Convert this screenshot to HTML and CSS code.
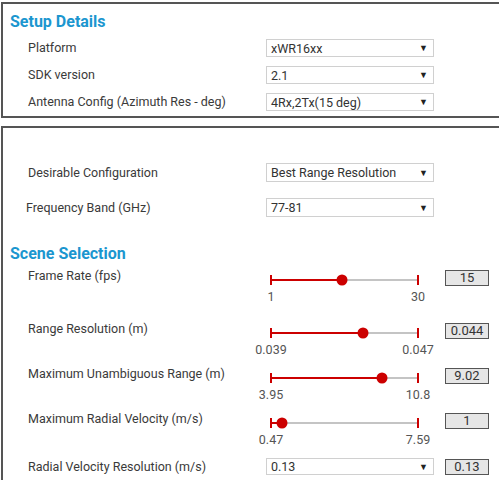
FILE: index.html
```html
<!DOCTYPE html>
<html lang="en">
<head>
    <meta charset="UTF-8">
    <meta name="viewport" content="width=device-width, initial-scale=1.0">
    <title>Setup Details</title>
    <link rel="stylesheet" href="styles.css">
</head>
<body>
    <section class="panel setup">
        <h2 class="heading">Setup Details</h2>
        <div class="row">
            <span class="label">Platform</span>
            <div class="select"><span>xWR16xx</span><i>&#9660;</i></div>
        </div>
        <div class="row">
            <span class="label">SDK version</span>
            <div class="select"><span>2.1</span><i>&#9660;</i></div>
        </div>
        <div class="row">
            <span class="label">Antenna Config (Azimuth Res - deg)</span>
            <div class="select"><span>4Rx,2Tx(15 deg)</span><i>&#9660;</i></div>
        </div>
    </section>

    <section class="panel scene">
        <div class="row tall">
            <span class="label">Desirable Configuration</span>
            <div class="select"><span>Best Range Resolution</span><i>&#9660;</i></div>
        </div>
        <div class="row tall freq">
            <span class="label">Frequency Band (GHz)</span>
            <div class="select"><span>77-81</span><i>&#9660;</i></div>
        </div>

        <h2 class="heading">Scene Selection</h2>

        <div class="slider-row first">
            <span class="label">Frame Rate (fps)</span>
            <div class="slider">
                <div class="track"><div class="fill" style="width:48.3%"></div><span class="knob" style="left:48.3%"></span></div>
                <div class="ticks"><span>1</span><span>30</span></div>
            </div>
            <div class="value">15</div>
        </div>
        <div class="slider-row">
            <span class="label">Range Resolution (m)</span>
            <div class="slider">
                <div class="track"><div class="fill" style="width:62.5%"></div><span class="knob" style="left:62.5%"></span></div>
                <div class="ticks"><span>0.039</span><span>0.047</span></div>
            </div>
            <div class="value">0.044</div>
        </div>
        <div class="slider-row">
            <span class="label">Maximum Unambiguous Range (m)</span>
            <div class="slider">
                <div class="track"><div class="fill" style="width:75.5%"></div><span class="knob" style="left:75.5%"></span></div>
                <div class="ticks"><span>3.95</span><span>10.8</span></div>
            </div>
            <div class="value">9.02</div>
        </div>
        <div class="slider-row">
            <span class="label">Maximum Radial Velocity (m/s)</span>
            <div class="slider">
                <div class="track"><div class="fill" style="width:7.4%"></div><span class="knob" style="left:7.4%"></span></div>
                <div class="ticks"><span>0.47</span><span>7.59</span></div>
            </div>
            <div class="value">1</div>
        </div>
        <div class="row last">
            <span class="label">Radial Velocity Resolution (m/s)</span>
            <div class="select"><span>0.13</span><i>&#9660;</i></div>
            <div class="value">0.13</div>
        </div>
    </section>
</body>
</html>
```

FILE: styles.css
```css
body {
    margin: 0;
    padding: 2px 0 0 1px;
    font-family: Roboto, "Liberation Sans", sans-serif;
    color: #333;
    background-color: #fff;
    overflow: hidden;
}
.panel {
    border: 2px solid #555;
    margin-right: -6px;
    box-sizing: border-box;
}
.setup {
    height: 116px;
    padding-bottom: 5px;
}
.scene {
    margin-top: 8px;
    padding-top: 35px;
    height: 354px;
    border-bottom: none;
}
.heading {
    margin: 0;
    padding-left: 7px;
    font-size: 16px;
    line-height: 20px;
    font-weight: bold;
    color: #1b96cf;
}
.setup .heading {
    margin-top: 8px;
    margin-bottom: 7px;
}
.scene .heading {
    margin-top: 27px;
    margin-bottom: 6px;
}
.row {
    display: flex;
    align-items: center;
    height: 18px;
    margin-bottom: 9px;
    padding-left: 25px;
}
.row.tall {
    height: 19px;
    margin-bottom: 16px;
}
.row.freq {
    margin-bottom: 0;
}
.row.freq .label {
    margin-left: -2px;
    width: 240px;
}
.label {
    width: 238px;
    flex: none;
    font-size: 12.5px;
    line-height: 16px;
    color: #3a3a3a;
}
.select {
    width: 168px;
    height: 100%;
    flex: none;
    box-sizing: border-box;
    border: 1px solid #d0d0d0;
    display: flex;
    align-items: center;
    justify-content: space-between;
    padding: 0 5px 0 4px;
    font-size: 12.5px;
    color: #333;
}
.select i {
    font-style: normal;
    font-size: 9px;
    color: #222;
}
.slider-row {
    display: flex;
    align-items: flex-start;
    height: 45px;
    padding-left: 25px;
}
.slider-row.first {
    height: 53px;
}
.slider-row .label {
    margin-top: -2px;
}
.slider {
    width: 168px;
    flex: none;
    padding-top: 9px;
}
.track {
    position: relative;
    width: 147px;
    height: 2px;
    margin-left: 5px;
    background-color: #c4c4c4;
}
.track::before,
.track::after {
    content: "";
    position: absolute;
    top: -4px;
    width: 2px;
    height: 10px;
    background-color: #cc0000;
}
.track::before {
    left: -1px;
}
.track::after {
    right: -1px;
}
.fill {
    height: 2px;
    background-color: #cc0000;
}
.knob {
    position: absolute;
    top: 1px;
    width: 11px;
    height: 11px;
    border-radius: 50%;
    background-color: #cc0000;
    transform: translate(-50%, -50%);
}
.ticks {
    display: flex;
    justify-content: space-between;
    width: 147px;
    margin-left: 5px;
    margin-top: 9px;
    font-size: 12.5px;
    line-height: 14px;
    color: #555;
}
.ticks span:first-child {
    transform: translateX(-50%);
}
.ticks span:last-child {
    transform: translateX(50%);
}
.value {
    width: 44px;
    height: 16px;
    flex: none;
    box-sizing: border-box;
    margin-left: 11px;
    border: 1px solid #555;
    background-color: #e6e6e6;
    font-size: 13px;
    line-height: 14px;
    text-align: center;
    color: #333;
}
.row.last {
    height: 17px;
}
```
